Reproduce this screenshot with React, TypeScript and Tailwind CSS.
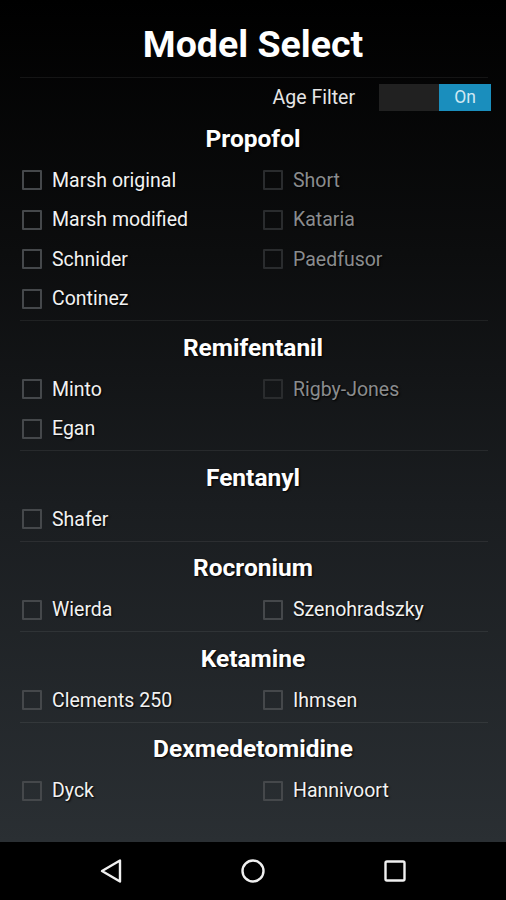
import React from "react";

type Item = { label: string; disabled?: boolean };
type Section = { title: string; left: Item[]; right: Item[] };

const sections: Section[] = [
  {
    title: "Propofol",
    left: [
      { label: "Marsh original" },
      { label: "Marsh modified" },
      { label: "Schnider" },
      { label: "Continez" },
    ],
    right: [
      { label: "Short", disabled: true },
      { label: "Kataria", disabled: true },
      { label: "Paedfusor", disabled: true },
    ],
  },
  {
    title: "Remifentanil",
    left: [{ label: "Minto" }, { label: "Egan" }],
    right: [{ label: "Rigby-Jones", disabled: true }],
  },
  { title: "Fentanyl", left: [{ label: "Shafer" }], right: [] },
  { title: "Rocronium", left: [{ label: "Wierda" }], right: [{ label: "Szenohradszky" }] },
  { title: "Ketamine", left: [{ label: "Clements 250" }], right: [{ label: "Ihmsen" }] },
  { title: "Dexmedetomidine", left: [{ label: "Dyck" }], right: [{ label: "Hannivoort" }] },
];

function CheckRow({ item }: { item: Item }) {
  return (
    <div className="flex h-[39.5px] items-center pt-[1px]">
      <div
        className={
          item.disabled
            ? "h-[20px] w-[20px] shrink-0 rounded-[1px] border-2 border-[#2a2c2e]"
            : "h-[20px] w-[20px] shrink-0 rounded-[1px] border-2 border-[#45484b]"
        }
      />
      <span
        className={
          item.disabled
            ? "ml-[10px] whitespace-nowrap text-[19.5px] text-[#8a8c8e] [text-shadow:1px_1px_2px_#000]"
            : "ml-[10px] whitespace-nowrap text-[19.5px] text-[#f2f2f2] [text-shadow:1px_1px_2px_#000]"
        }
      >
        {item.label}
      </span>
    </div>
  );
}

function Divider() {
  return <div className="ml-[20px] mr-[18px] h-px bg-[#ffffff12]" />;
}

function SectionBlock({ s }: { s: Section }) {
  const rows = Math.max(s.left.length, s.right.length);
  const cells: React.ReactNode[] = [];
  for (let i = 0; i < rows; i++) {
    cells.push(
      <div key={"l" + i}>{s.left[i] ? <CheckRow item={s.left[i]} /> : <div className="h-[39.5px]" />}</div>
    );
    cells.push(
      <div key={"r" + i}>{s.right[i] ? <CheckRow item={s.right[i]} /> : <div className="h-[39.5px]" />}</div>
    );
  }
  return (
    <div className="pb-[2px]">
      <div className="flex h-[48px] items-center justify-center pt-[6px]">
        <h2 className="whitespace-nowrap text-[24.5px] font-bold text-white [text-shadow:1px_1px_2px_#000]">{s.title}</h2>
      </div>
      <div className="grid grid-cols-[241px_1fr] pl-[22px]">{cells}</div>
    </div>
  );
}

export default function App() {
  return (
    <div className="flex h-[900px] w-[506px] flex-col overflow-hidden font-['Roboto',sans-serif]">
      <div className="flex-1 bg-[linear-gradient(180deg,#000000_0%,#0c0d0e_30%,#1a1d20_60%,#2a2f33_100%)]">
        <div className="flex h-[77px] items-center justify-center pt-[12px]">
          <h1 className="text-[37.5px] font-bold text-white">Model Select</h1>
        </div>
        <Divider />
        <div className="flex h-[34px] items-center justify-end pr-[15px] pt-[5px]">
          <span className="mr-[24px] text-[19.5px] text-[#e6e6e6]">Age Filter</span>
          <div className="flex h-[27px] w-[112px]">
            <div className="w-[60px] bg-[#212121]" />
            <div className="flex flex-1 items-center justify-center bg-[#1a8ebd] text-[17.5px] text-[#cfe8f3]">On</div>
          </div>
        </div>
        {sections.map((s, i) => (
          <React.Fragment key={s.title}>
            {i > 0 && <Divider />}
            <SectionBlock s={s} />
          </React.Fragment>
        ))}
      </div>
      <div className="flex h-[58px] items-center justify-center gap-[116px] bg-black">
        <svg width="26" height="26" viewBox="0 0 26 26">
          <path d="M22 2.5 L22 23.5 L4 13 Z" fill="none" stroke="#f0f0f0" strokeWidth="2.4" strokeLinejoin="round" />
        </svg>
        <svg width="26" height="26" viewBox="0 0 26 26">
          <circle cx="13" cy="13" r="10.5" fill="none" stroke="#f0f0f0" strokeWidth="2.4" />
        </svg>
        <svg width="26" height="26" viewBox="0 0 26 26">
          <rect x="3.5" y="3.5" width="19" height="19" rx="1.5" fill="none" stroke="#f0f0f0" strokeWidth="2.4" />
        </svg>
      </div>
    </div>
  );
}
